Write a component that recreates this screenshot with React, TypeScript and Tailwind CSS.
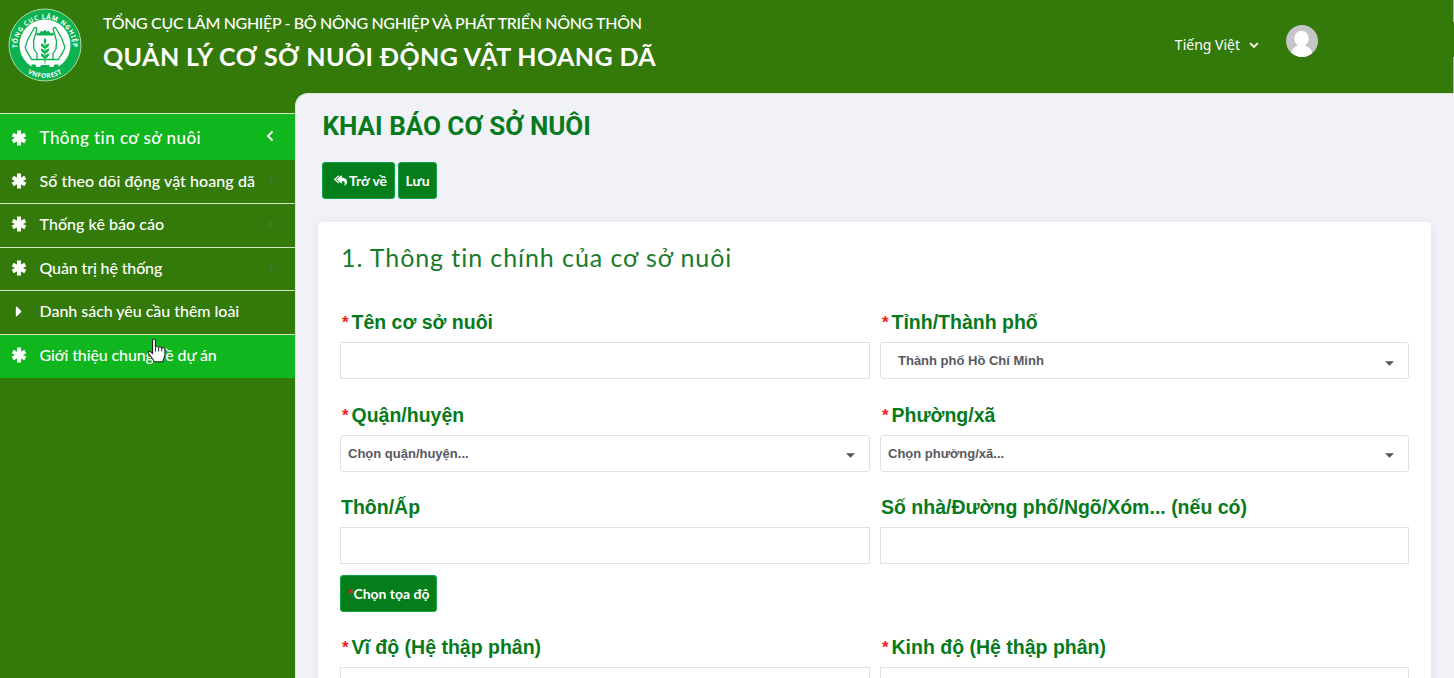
import React from "react";
import { FaCaretRight, FaReplyAll } from "react-icons/fa";

const lato = "font-['Lato','Open_Sans',sans-serif]";
const arial = "font-['Liberation_Sans',Arial,sans-serif]";

function Asterisk() {
  return (
    <svg viewBox="0 0 16 16" className="h-4 w-4 shrink-0" stroke="#fff" strokeWidth="4" strokeLinejoin="round">
      <path d="M8 .6v14.800M1.700 4.400l12.600 7.200M14.300 4.400l-12.600 7.200" />
    </svg>
  );
}

function Logo() {
  return (
    <svg viewBox="0 0 74 74" className="h-[74px] w-[74px] shrink-0">
      <defs>
        <path id="arc-top" d="M9 39a28 28 0 1 1 56 0" />
        <path id="arc-bottom" d="M10 55.900a33 33 0 0 0 54 0" />
      </defs>
      <circle cx="37" cy="37" r="36" fill="#0bb24f" stroke="#bfe0b0" strokeWidth="0.9" />
      <circle cx="37" cy="37" r="25.5" fill="#fff" />
      <g fill="#0bb24f">
        <path d="M14 58.500h9.500v-2h4l1 2.500h3.500l1-2h8l1 2h3.500l1-2.500h4v2H60v6H14z" />
        <path d="M28.500 27.500v-3l3 .8 1.500-2.300 2.500.5 1.500-2 1.500 2 2.500-.5 1.500 2.300 3-.8v3z" />
        <path d="M37 30c1.800 2 1.800 3.700 0 5.500-1.800-1.800-1.800-3.500 0-5.500z" />
        {[0, 5, 10].map((y) => (
          <path
            key={y}
            transform={`translate(0 ${y})`}
            d="M37 39.200c.4-2.500 2-3.600 4.200-3.800 0 2.800-1.600 4.500-4.200 5-2.600-.5-4.200-2.200-4.200-5 2.200.2 3.800 1.300 4.200 3.800z"
          />
        ))}
      </g>
      <path d="M37 34v21.500" stroke="#0bb24f" strokeWidth="1" />
      <g fill="none" stroke="#0bb24f" strokeWidth="1.300" strokeLinejoin="round" strokeLinecap="round">
        <path d="M23.500 51.500c-1.500-4-6-8-6.300-12.500L20 31l6.300-11c1.600-1.300 3 .2 2.400 1.800L25.500 33l.5 8 3 4.500v6z" />
        <path d="M50.500 51.500c1.500-4 6-8 6.300-12.500L54 31l-6.300-11c-1.600-1.300-3 .2-2.400 1.800L48.500 33l-.5 8-3 4.500v6z" />
        <path d="M29 51.500H45" />
      </g>
      <g fill="#fff" className="font-['Noto_Sans',sans-serif]" fontWeight="700" textAnchor="middle">
        <text fontSize="6.500" letterSpacing="0.700">
          <textPath href="#arc-top" startOffset="50%">TỔNG CỤC LÂM NGHIỆP</textPath>
        </text>
        <text fontSize="6.500" letterSpacing="0.400">
          <textPath href="#arc-bottom" startOffset="50%">VNFOREST</textPath>
        </text>
      </g>
    </svg>
  );
}

function Chevron({ className }: { className: string }) {
  return (
    <svg viewBox="0 0 8 12" className={className} fill="none" stroke="currentColor" strokeWidth="2">
      <path d="M6.500 1.500L2 6l4.500 4.500" />
    </svg>
  );
}

type Item = { text: string; size: string; box: string; chevron?: string; caret?: boolean };

const items: Item[] = [
  { text: "Thông tin cơ sở nuôi", size: "text-[17px] tracking-[0.45px]", box: "h-[47px] bg-[#0fb61e] border-t-[1.5px] pt-px", chevron: "mb-[3px] h-3 w-2 text-white" },
  { text: "Sổ theo dõi động vật hoang dã", size: "text-[16px] tracking-[0.07px]", box: "h-[43px] pb-0.5", chevron: "h-[9px] w-1.5 text-[#48773a]" },
  { text: "Thống kê báo cáo", size: "text-[16px] tracking-[0.05px]", box: "h-[44px] border-t-[1.5px] pb-[3px]", chevron: "h-[9px] w-1.5 text-[#48773a]" },
  { text: "Quản trị hệ thống", size: "text-[16px] tracking-[-0.13px]", box: "h-[43px] border-t-[1.5px] pb-0.5", chevron: "h-[9px] w-1.5 text-[#48773a]" },
  { text: "Danh sách yêu cầu thêm loài", size: "text-[16px] tracking-[-0.03px]", box: "h-[44px] border-t-[1.5px] pb-[3px]", caret: true },
  { text: "Giới thiệu chung về dự án", size: "text-[16px] tracking-[-0.12px]", box: "h-[44px] bg-[#0fb61e] border-t-[1.5px] pb-[3px]" },
];

function Sidebar() {
  return (
    <nav className={`w-[295px] shrink-0 pt-5 ${lato}`}>
      {items.map((it) => (
        <div key={it.text} className={`flex items-center border-[#cfe8c0] pl-[11px] pr-[21px] text-white ${it.box}`}>
          {it.caret ? (
            <span className="flex w-4 justify-center"><FaCaretRight size={17} /></span>
          ) : (
            <Asterisk />
          )}
          <span className={`ml-[12.5px] flex-1 whitespace-nowrap font-medium [font-variant-ligatures:none] ${it.size}`}>{it.text}</span>
          {it.chevron && <Chevron className={it.chevron} />}
        </div>
      ))}
    </nav>
  );
}

function Label({ text, required }: { text: string; required?: boolean }) {
  return (
    <div className={`flex h-10 items-center whitespace-pre pt-[2px] text-[19.5px] font-bold text-[#067a1c] ${arial}`}>
      {required && <span className="ml-[2px] w-[9.5px] text-[17px] text-[#f51b1b]">*</span>}
      <span className={required ? "" : "pl-px"}>{text}</span>
    </div>
  );
}

function Select({ text, pad }: { text: string; pad: string }) {
  return (
    <div className={`flex h-[37px] items-center justify-between rounded-[3px] border-[1.5px] border-[#e0e1e4] pr-[14px] pt-px text-[13px] font-bold text-[#575962] ${arial} ${pad}`}>
      <span>{text}</span>
      <svg viewBox="0 0 8 4" className="mt-1 h-[5px] w-[9px]" fill="#555"><path d="M0 0h8L4 4z" /></svg>
    </div>
  );
}

function Field({ label, required, value, pad = "pl-[7px]" }: { label: string; required?: boolean; value?: string; pad?: string }) {
  return (
    <div>
      <Label text={label} required={required} />
      {value ? <Select text={value} pad={pad} /> : <input className="block h-[37px] w-full border-[1.5px] border-[#e0e1e4] bg-white px-2" />}
    </div>
  );
}

const btn = `flex items-center justify-center rounded-[3px] border border-[#12a34a] bg-[#047e1b] text-[14px] font-bold text-white ${lato}`;
const grid = "grid grid-cols-[530px_529px] gap-x-[10px]";

export default function App() {
  return (
    <div className="relative flex h-[678px] w-[1454px] flex-col overflow-hidden bg-[#337a0b]">
      <header className={`flex h-[93px] shrink-0 items-start pl-2 pt-2 text-white ${lato}`}>
        <Logo />
        <div className="ml-[21px] flex-1 whitespace-nowrap">
          <div className="mt-[3px] text-[16px] leading-6 tracking-[-0.34px] font-medium">TỔNG CỤC LÂM NGHIỆP - BỘ NÔNG NGHIỆP VÀ PHÁT TRIỂN NÔNG THÔN</div>
          <div className="mt-[5px] text-[25px] font-bold leading-8 tracking-[0.4px]">QUẢN LÝ CƠ SỞ NUÔI ĐỘNG VẬT HOANG DÃ</div>
        </div>
        <div className="mr-[136px] flex items-start">
          <span className="mt-[27px] font-['Noto_Sans',sans-serif] text-[14px] leading-5">Tiếng Việt</span>
          <svg viewBox="0 0 10 7" className="ml-[9px] mt-[34px] h-[7px] w-[10px]" fill="none" stroke="#fff" strokeWidth="1.800"><path d="M1.200 1.200L5 5l3.800-3.800" /></svg>
          <svg viewBox="0 0 32 32" className="ml-[27px] mt-[17px] h-8 w-8">
            <clipPath id="avatar"><circle cx="16" cy="16" r="16" /></clipPath>
            <g clipPath="url(#avatar)">
              <path fill="#c5c5c7" d="M0 0h32v32H0z" />
              <ellipse cx="15.500" cy="13.500" rx="7.300" ry="7.700" fill="#fff" />
              <path d="M11.500 18h8v3c4 1 7 4 7.500 11H4.500C5 25 7.500 22 11.500 21z" fill="#fff" />
            </g>
          </svg>
        </div>
      </header>

      <div className="flex flex-1">
        <Sidebar />
        <main className="flex-1 rounded-tl-[13px] border-t border-l border-[#dfe9da] bg-[#f1f2f8] pl-[22px] pr-[22px]">
          <h1 className="pl-[4.5px] pt-4 font-['Roboto',sans-serif] text-[26px] font-bold leading-8 text-[#067a1c]">KHAI BÁO CƠ SỞ NUÔI</h1>
          <div className="mt-5 flex gap-[3px] pl-1">
            <button className={`h-[37px] w-[73px] gap-0.5 pl-1 ${btn}`}><FaReplyAll size={13} /><span>Trở về</span></button>
            <button className={`h-[37px] w-[39px] ${btn}`}>Lưu</button>
          </div>
          <section className="mt-[23px] h-[480px] w-[1113px] rounded bg-white pl-[22px] pr-[21px] pt-[18px] shadow-[0_1px_8px_rgba(69,65,78,0.1)]">
            <h2 className={`h-[34px] pl-px text-[25px] leading-[34px] tracking-[0.92px] text-[#1a7a2a] [font-variant-ligatures:none] ${lato}`}>1. Thông tin chính của cơ sở nuôi</h2>
            <div className={`mt-7 gap-y-[15.5px] ${grid}`}>
              <Field label="Tên cơ sở nuôi" required />
              <Field label="Tỉnh/Thành phố" required value="Thành phố Hồ Chí Minh" pad="pl-[17px]" />
              <Field label="Quận/huyện" required value="Chọn quận/huyện..." />
              <Field label="Phường/xã" required value="Chọn phường/xã..." />
              <Field label="Thôn/Ấp" />
              <Field label="Số nhà/Đường phố/Ngõ/Xóm... (nếu có)" />
            </div>
            <button className={`mt-[10.5px] h-[37px] w-[97px] ${btn}`}><span className="text-[#f51b1b]">*</span><span>Chọn tọa độ</span></button>
            <div className={`mt-[15.5px] ${grid}`}>
              <Field label="Vĩ độ (Hệ thập phân)" required />
              <Field label="Kinh độ (Hệ thập phân)" required />
            </div>
          </section>
        </main>
      </div>

      <div className="absolute right-0 top-0 h-[22px] w-px bg-[#9fbf90]" />
      <div className="absolute right-0 top-[57px] h-9 w-px bg-[#9fbf90]" />
      <svg viewBox="0 0 18 26" preserveAspectRatio="none" className="absolute left-[147px] top-[338px] h-[26px] w-5">
        <path
          d="M5 2.200C5 .7 7.600.7 7.600 2.200v7.300c0-1.200 2.700-1.200 2.900.2.200-1 2.600-.9 2.800.6.400-1 2.800-.6 2.800 1v5.200c0 3-1.600 4.300-1.900 7.300H6.500c-.6-3-3.400-5.200-5.200-8.300-.9-1.700 1-2.700 2.200-1.500L5 15.500z"
          fill="#fff" stroke="#222" strokeWidth="1"
        />
        <path d="M7.600 9.500v4M10.500 10v3.500M13.300 10.500v3" stroke="#222" strokeWidth="0.900" />
      </svg>
    </div>
  );
}
